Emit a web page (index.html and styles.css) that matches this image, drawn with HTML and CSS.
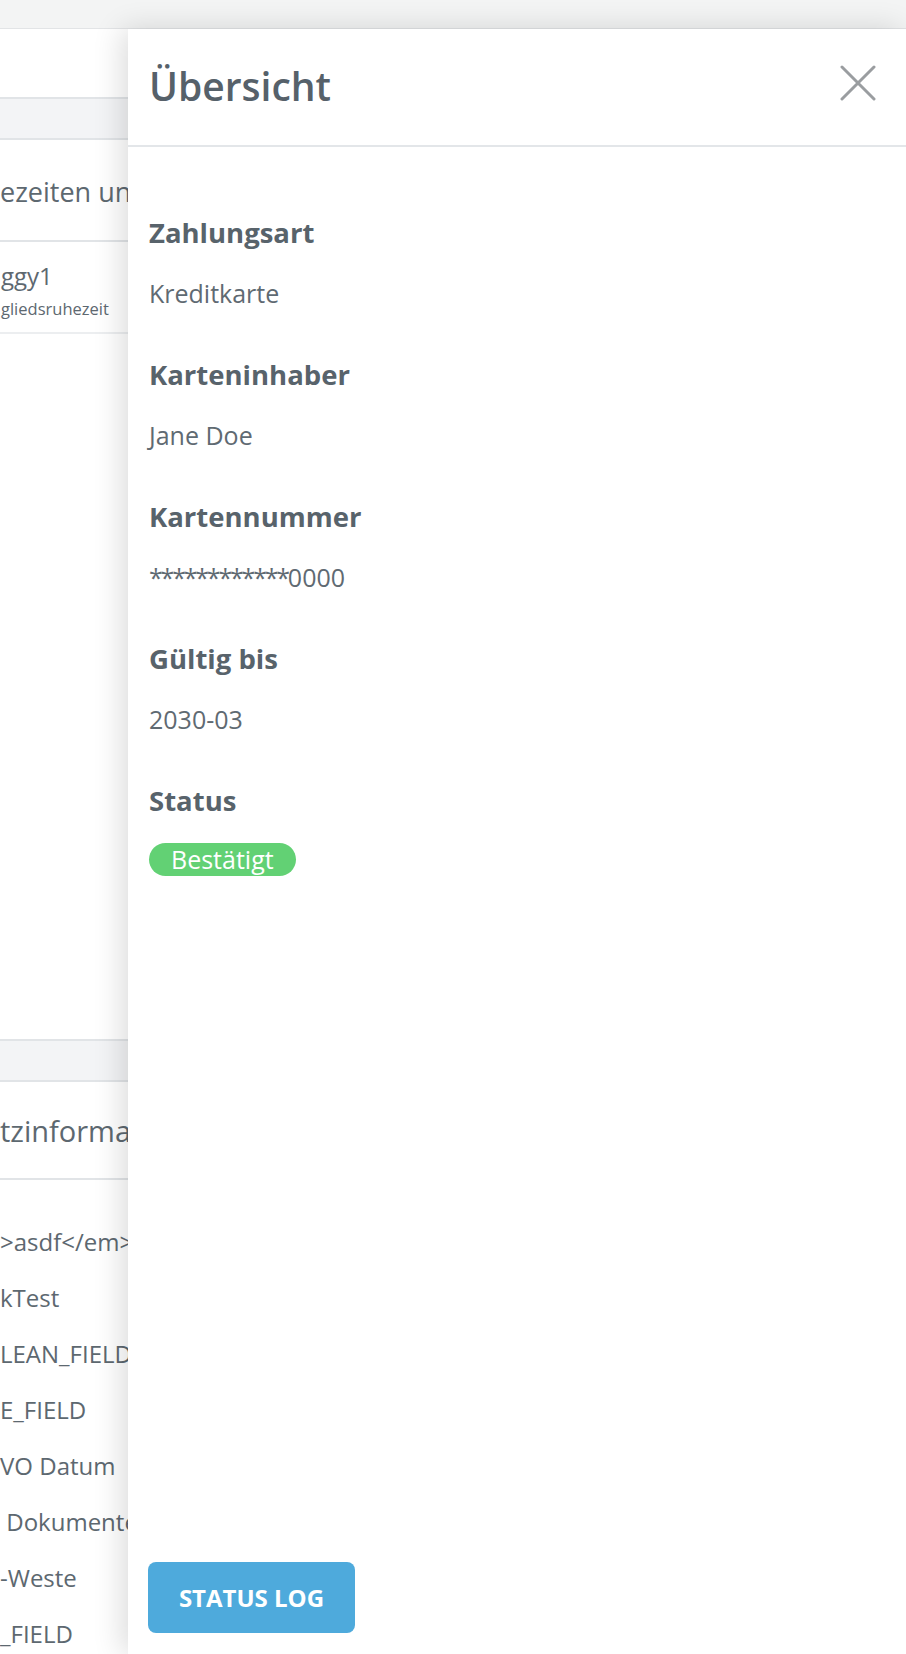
FILE: index.html
```html
<!DOCTYPE html>
<html lang="de">
<head>
  <meta charset="UTF-8">
  <meta name="viewport" content="width=device-width, initial-scale=1.0">
  <title>Übersicht</title>
  <link rel="stylesheet" href="styles.css">
</head>
<body>

  <div class="topbar"></div>

  <div class="page">
    <div class="band"></div>
    <div class="section-title">ezeiten und Sperren</div>
    <div class="row-item">
      <div class="row-name">ggy1</div>
      <div class="row-sub">gliedsruhezeit</div>
    </div>

    <div class="band band-second"></div>
    <div class="section-title section-title-2">tzinformationen</div>
    <ul class="field-list">
      <li>&gt;asdf&lt;/em&gt;</li>
      <li>kTest</li>
      <li>LEAN_FIELD</li>
      <li>E_FIELD</li>
      <li>VO Datum</li>
      <li> Dokumente</li>
      <li>-Weste</li>
      <li>_FIELD</li>
    </ul>
    <div class="band band-last"></div>
  </div>

  <div class="drawer">
    <div class="drawer-header">
      <h1>Übersicht</h1>
      <button class="btn-close" aria-label="Schließen">
        <svg width="36" height="36" viewBox="0 0 36 36">
          <path d="M2 2 L34 34 M34 2 L2 34" stroke="#9a9da0" stroke-width="3" stroke-linecap="round" fill="none"/>
        </svg>
      </button>
    </div>

    <div class="drawer-body">
      <div class="info">
        <div class="info-label">Zahlungsart</div>
        <div class="info-value">Kreditkarte</div>
      </div>
      <div class="info">
        <div class="info-label">Karteninhaber</div>
        <div class="info-value">Jane Doe</div>
      </div>
      <div class="info">
        <div class="info-label">Kartennummer</div>
        <div class="info-value"><span class="mask">************</span>0000</div>
      </div>
      <div class="info">
        <div class="info-label">Gültig bis</div>
        <div class="info-value">2030-03</div>
      </div>
      <div class="info">
        <div class="info-label">Status</div>
        <span class="badge">Bestätigt</span>
      </div>
    </div>

    <button class="btn-log">STATUS LOG</button>
  </div>

</body>
</html>
```

FILE: styles.css
```css
body {
  margin: 0;
  font-family: "Open Sans", "Noto Sans", Arial, sans-serif;
  background: white;
  color: #5d6870;
  height: 1654px;
  overflow: hidden;
  position: relative;
}

.topbar {
  height: 28px;
  background: #f3f4f4;
  border-bottom: 1px solid #e2e4e6;
}

.page {
  padding-top: 68px;
}

.band {
  height: 39px;
  background: #f3f4f6;
  border-top: 2px solid #e1e4e7;
  border-bottom: 2px solid #e1e4e7;
}

.band-second {
  margin-top: 705px;
}

.band-last {
  height: 20px;
  border-bottom: none;
}

.section-title {
  font-size: 27px;
  white-space: nowrap;
  height: 100px;
  line-height: 104px;
  border-bottom: 2px solid #e1e4e7;
}

.section-title-2 {
  font-size: 29px;
  height: 96px;
  line-height: 98px;
}

.row-item {
  height: 92px;
  padding-left: 1px;
  border-bottom: 2px solid #eceef0;
  box-sizing: border-box;
  padding-top: 19px;
}

.row-name {
  font-size: 24px;
  line-height: 30px;
  white-space: nowrap;
}

.row-sub {
  margin-top: 5px;
  font-size: 16.5px;
  line-height: 26px;
  white-space: nowrap;
}

.field-list {
  list-style: none;
  margin: 0;
  padding: 34px 0 4px 0;
}

.field-list li {
  height: 56px;
  line-height: 56px;
  font-size: 24px;
  white-space: pre;
}

.drawer {
  position: absolute;
  top: 29px;
  left: 128px;
  right: 0;
  bottom: 0;
  background: white;
  box-shadow: -6px 0 28px rgba(0, 0, 0, 0.14);
  display: flex;
  flex-direction: column;
}

.drawer-header {
  height: 116px;
  border-bottom: 2px solid #e3e6e9;
  display: flex;
  align-items: center;
  justify-content: space-between;
  padding: 0 30px 0 21px;
}

.drawer-header h1 {
  margin: -4px 0 0 0;
  font-size: 39px;
  font-weight: 600;
  color: #56616a;
}

.btn-close {
  background: none;
  border: none;
  padding: 0;
  width: 36px;
  height: 36px;
  margin-top: -8px;
  cursor: pointer;
}

.drawer-body {
  padding: 71px 21px 0 21px;
}

.info {
  margin-bottom: 52px;
}

.info-label {
  font-size: 27.5px;
  font-weight: 700;
  line-height: 30px;
  color: #58636b;
}

.info-value {
  margin-top: 30px;
  font-size: 25px;
  line-height: 30px;
  color: #5f6a72;
}

.mask {
  letter-spacing: -2.2px;
}

.badge {
  display: inline-block;
  margin-top: 27px;
  background: #62d174;
  color: white;
  font-size: 25px;
  line-height: 33px;
  padding: 0 22px;
  border-radius: 17px;
}

.btn-log {
  margin: auto 0 21px 20px;
  align-self: flex-start;
  width: 207px;
  height: 71px;
  background: #4eaadc;
  color: white;
  border: none;
  border-radius: 8px;
  font-family: inherit;
  font-size: 24px;
  font-weight: 700;
  cursor: pointer;
}
```
